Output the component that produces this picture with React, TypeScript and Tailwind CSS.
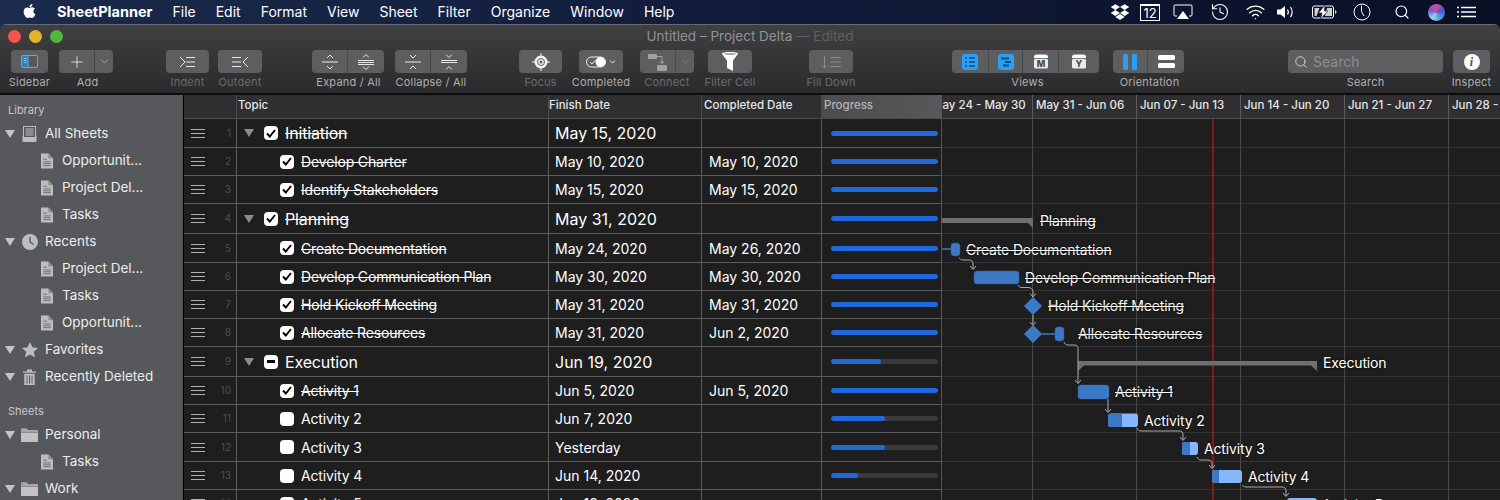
import { Plus, ChevronDown, Search, Wifi, History } from "lucide-react";
import { FaApple, FaDropbox } from "react-icons/fa";
import type { ReactNode } from "react";

type Row = {
  n: number;
  topic: string;
  finish: string;
  completed?: string;
  h: string;
  group?: boolean;
  state: "done" | "mixed" | "open";
  bar: string;
};

const rows: Row[] = [
  { n: 1, topic: "Initiation", finish: "May 15, 2020", h: "h-[29px]", group: true, state: "done", bar: "w-full" },
  { n: 2, topic: "Develop Charter", finish: "May 10, 2020", completed: "May 10, 2020", h: "h-[28px]", state: "done", bar: "w-full" },
  { n: 3, topic: "Identify Stakeholders", finish: "May 15, 2020", completed: "May 15, 2020", h: "h-[28px]", state: "done", bar: "w-full" },
  { n: 4, topic: "Planning", finish: "May 31, 2020", h: "h-[30px]", group: true, state: "done", bar: "w-full" },
  { n: 5, topic: "Create Documentation", finish: "May 24, 2020", completed: "May 26, 2020", h: "h-[29px]", state: "done", bar: "w-full" },
  { n: 6, topic: "Develop Communication Plan", finish: "May 30, 2020", completed: "May 30, 2020", h: "h-[28px]", state: "done", bar: "w-full" },
  { n: 7, topic: "Hold Kickoff Meeting", finish: "May 31, 2020", completed: "May 31, 2020", h: "h-[28px]", state: "done", bar: "w-full" },
  { n: 8, topic: "Allocate Resources", finish: "May 31, 2020", completed: "Jun 2, 2020", h: "h-[28px]", state: "done", bar: "w-full" },
  { n: 9, topic: "Execution", finish: "Jun 19, 2020", h: "h-[30px]", group: true, state: "mixed", bar: "w-[47%]" },
  { n: 10, topic: "Activity 1", finish: "Jun 5, 2020", completed: "Jun 5, 2020", h: "h-[28px]", state: "done", bar: "w-full" },
  { n: 11, topic: "Activity 2", finish: "Jun 7, 2020", h: "h-[28px]", state: "open", bar: "w-[50%]" },
  { n: 12, topic: "Activity 3", finish: "Yesterday", h: "h-[29px]", state: "open", bar: "w-[50%]" },
  { n: 13, topic: "Activity 4", finish: "Jun 14, 2020", h: "h-[28px]", state: "open", bar: "w-[25%]" },
  { n: 14, topic: "Activity 5", finish: "Jun 18, 2020", h: "h-[28px]", state: "open", bar: "w-[10%]" },
];

const weeks = [
  "May 24 - May 30",
  "May 31 - Jun 06",
  "Jun 07 - Jun 13",
  "Jun 14 - Jun 20",
  "Jun 21 - Jun 27",
  "Jun 28 - Jul 04",
];

const menus = ["File", "Edit", "Format", "View", "Sheet", "Filter", "Organize", "Window", "Help"];

const ganttLabels = [
  { text: "Planning", cls: "left-[98px] top-[92px]", done: true },
  { text: "Create Documentation", cls: "left-[24px] top-[121px]", done: true },
  { text: "Develop Communication Plan", cls: "left-[83px] top-[149px]", done: true },
  { text: "Hold Kickoff Meeting", cls: "left-[106px] top-[177px]", done: true },
  { text: "Allocate Resources", cls: "left-[136px] top-[205px]", done: true },
  { text: "Execution", cls: "left-[381px] top-[234px]", done: false },
  { text: "Activity 1", cls: "left-[173px] top-[263px]", done: true },
  { text: "Activity 2", cls: "left-[202px] top-[292px]", done: false },
  { text: "Activity 3", cls: "left-[262px] top-[320px]", done: false },
  { text: "Activity 4", cls: "left-[306px] top-[348px]", done: false },
  { text: "Activity 5", cls: "left-[380px] top-[376px]", done: false },
];

const Tri = ({ cls = "" }: { cls?: string }) => (
  <svg width="10" height="8" viewBox="0 0 10 8" className={cls}>
    <path d="M0 0h10L5 8z" fill="currentColor" />
  </svg>
);

const Check = ({ state }: { state: Row["state"] }) => (
  <div className="w-[14px] h-[14px] rounded-[4px] bg-white flex items-center justify-center shrink-0">
    {state === "done" && (
      <svg width="10" height="9" viewBox="0 0 10 9">
        <path d="M1 4.500l2.800 3L9 1" fill="none" stroke="#000" strokeWidth="1.900" />
      </svg>
    )}
    {state === "mixed" && <div className="w-[8px] h-[2.500px] bg-black" />}
  </div>
);

const Doc = () => (
  <svg width="12" height="16" viewBox="0 0 13 16" className="text-[#bdbdbf]">
    <path d="M0 0h8l5 5v11H0z" fill="currentColor" />
    <path d="M8 0v5h5" fill="#8d8e91" />
    <path d="M2.500 6h4M2.500 9h8M2.500 11h8M2.500 13h8" stroke="#6a6b6e" strokeWidth="1" />
  </svg>
);

const Tray = () => (
  <svg width="15" height="16" viewBox="0 0 15 16">
    <rect x="0.500" y="9" width="14" height="7" rx="1" fill="#bdbdbf" />
    <rect x="1.500" y="0.500" width="12" height="11" fill="#57585c" stroke="#bdbdbf" />
    <path d="M3.500 3h8M3.500 5h8M3.500 7h8M3.500 9h8" stroke="#bdbdbf" />
  </svg>
);

const ClockIcon = () => (
  <svg width="16" height="16" viewBox="0 0 16 16">
    <circle cx="8" cy="8" r="8" fill="#bdbdbf" />
    <path d="M8 3v5l3.500 2.500" fill="none" stroke="#57585c" strokeWidth="1.400" />
  </svg>
);

const Star = () => (
  <svg width="16" height="16" viewBox="0 0 16 16">
    <path d="M8 0l2.400 5.300 5.600.6-4.200 3.800 1.200 5.700L8 12.500l-5 2.900 1.200-5.700L0 5.900l5.600-.6z" fill="#bdbdbf" />
  </svg>
);

const Trash = () => (
  <svg width="13" height="16" viewBox="0 0 13 16">
    <path d="M0 2.500h13v1.300H0zM4 0.500h5v2H4z" fill="#bdbdbf" />
    <path d="M1.300 4.800h10.400V16H1.300z" fill="#bdbdbf" />
    <path d="M4 6.500v8M6.500 6.500v8M9 6.500v8" stroke="#57585c" />
  </svg>
);

const Folder = () => (
  <svg width="17" height="14" viewBox="0 0 17 14">
    <path d="M0 1.500C0 .8.500.3 1.200.3h4.300L7 2h8.800c.7 0 1.200.5 1.200 1.200V4H0z" fill="#a6a7a9" />
    <path d="M0 4.500h17V13c0 .6-.5 1-1 1H1c-.5 0-1-.4-1-1z" fill="#c2c2c4" />
  </svg>
);

const SideRow = ({ icon, label, child }: { icon: ReactNode; label: string; child?: boolean }) => (
  <div className="flex items-center h-[27px] text-[13.500px] text-[#ececec] whitespace-nowrap">
    {child ? (
      <>
        <div className="w-[13px] ml-[40px] flex justify-center">{icon}</div>
        <span className="ml-[9px]">{label}</span>
      </>
    ) : (
      <>
        <Tri cls="ml-[5px] text-[#c4c4c6] shrink-0" />
        <div className="w-[17px] ml-[6px] flex justify-center">{icon}</div>
        <span className="ml-[7px]">{label}</span>
      </>
    )}
  </div>
);

const Tool = ({ label, w, cls = "", labelCls = "", dim, children }: { label: string; w: string; cls?: string; labelCls?: string; dim?: boolean; children: ReactNode }) => (
  <div className={`${w} ${cls} flex flex-col items-center shrink-0`}>
    <div className="w-full h-[23px] rounded-[4px] bg-[#5e5e60] flex items-stretch overflow-hidden">{children}</div>
    <div className={`mt-[2px] text-[11px] leading-[14px] tracking-[0.2px] whitespace-nowrap ${labelCls} ${dim ? "text-[#6b6b6d]" : "text-[#adadaf]"}`}>{label}</div>
  </div>
);

const Seg = ({ w, line, children }: { w: string; line?: boolean; children: ReactNode }) => (
  <div className={`${w} flex items-center justify-center ${line ? "border-r border-[#49494b]" : ""}`}>{children}</div>
);

const Stroke = ({ d, w = 24, color = "#e8e8e8", h = 16 }: { d: string; w?: number; h?: number; color?: string }) => (
  <svg width={w} height={h} viewBox={`0 0 ${w} ${h}`}>
    <path d={d} fill="none" stroke={color} strokeWidth="1" />
  </svg>
);

const CalTile = ({ letter }: { letter: string }) => (
  <svg width="16" height="15" viewBox="0 0 16 15">
    <path d="M1 3c0-1.500 1-2.500 2.500-2.500h9C14 .5 15 1.500 15 3v1H1z" fill="#fff" />
    <rect x="1" y="4.800" width="14" height="9.700" rx="1.500" fill="#e9e9e9" />
    <text x="8" y="13" textAnchor="middle" fontSize="9" fontWeight="800" fill="#4a4a4a" fontFamily="Inter, sans-serif">{letter}</text>
  </svg>
);

export default function App() {
  return (
    <div className="w-[1500px] h-[500px] overflow-hidden bg-gradient-to-r from-[#1b2b4c] via-[#111b3a] to-[#090f25] [font-family:Inter,sans-serif] text-white">
      {/* menu bar */}
      <div className="h-[24px] flex items-center text-[14px] leading-none text-white">
        <FaApple className="ml-[22px] w-[15px] h-[16px] -mt-[2px]" />
        <span className="ml-[20px] text-[14.500px] font-bold">SheetPlanner</span>
        {menus.map((m) => (
          <span key={m} className="ml-[20px]">{m}</span>
        ))}
        <div className="ml-auto flex items-center">
          <FaDropbox className="w-[20px] h-[18px]" />
          <div className="ml-[10px] w-[20px] h-[17px] border border-white text-[13px] leading-[15px] text-center border-t-[2px]">12</div>
          <svg width="20" height="16" viewBox="0 0 20 16" className="ml-[13px]">
            <path d="M4 12H2a1 1 0 0 1-1-1V2a1 1 0 0 1 1-1h16a1 1 0 0 1 1 1v9a1 1 0 0 1-1 1h-2" fill="none" stroke="#fff" />
            <path d="M10 7l6 8H4z" fill="#fff" />
          </svg>
          <History className="ml-[17px] w-[20px] h-[20px]" strokeWidth={1.300} />
          <Wifi className="ml-[15px] w-[21px] h-[20px]" strokeWidth={1.600} />
          <svg width="18" height="14" viewBox="0 0 18 14" className="ml-[11px]">
            <path d="M0 4.500h3.500L8 1v12L3.500 9.500H0z" fill="#fff" />
            <path d="M10.500 4.500c1 1.500 1 3.500 0 5M13.500 2c2 3 2 7 0 10" fill="none" stroke="#fff" strokeWidth="1.200" />
          </svg>
          <svg width="25" height="14" viewBox="0 0 25 14" className="ml-[17px]">
            <rect x="0.500" y="1" width="21" height="12" rx="2" fill="none" stroke="#fff" />
            <path d="M2.500 3h5l-3 8h-2zM15 3h5v8h-7zM23 5c1 .3 1.500 1 1.500 2s-.5 1.700-1.500 2z" fill="#cfcfcf" />
            <path d="M13 0L6.500 8H10l-1.500 6L16 6h-3.700z" fill="#fff" stroke="#101730" strokeWidth="0.600" />
          </svg>
          <svg width="18" height="18" viewBox="0 0 18 18" className="ml-[16px]">
            <circle cx="9" cy="9" r="8" fill="none" stroke="#fff" />
            <path d="M8.500 2.500v6l2.500 4.500" fill="none" stroke="#fff" />
          </svg>
          <Search className="ml-[23px] w-[16px] h-[16px]" strokeWidth={1.800} />
          <div className="ml-[18px] w-[17px] h-[17px] rounded-full bg-[conic-gradient(#c64ba8,#5a4fd0,#3f9fe0,#8fd8e8,#8a55c8,#c64ba8)]" />
          <svg width="19" height="12" viewBox="0 0 19 12" className="ml-[12px] mr-[24px]">
            <path d="M4 1.500h15M4 6h15M4 10.500h15" stroke="#fff" strokeWidth="1.500" />
            <path d="M0 1.500h2M0 6h2M0 10.500h2" stroke="#fff" strokeWidth="1.500" />
          </svg>
        </div>
      </div>

      {/* window */}
      <div className="h-[476px] rounded-t-[6px] overflow-hidden bg-[#1e1e1e] flex flex-col">
        <div className="h-[71px] shrink-0 bg-gradient-to-b from-[#404042] to-[#2b2b2d] border-t border-[#6a6a6c] border-b-2 border-b-[#0c0c0c] flex flex-col">
          <div className="h-[22px] grid grid-cols-[1fr_auto_1fr] items-center">
            <div className="flex gap-[8px] pl-[8px]">
              <div className="w-[13px] h-[13px] rounded-full bg-[#f2544e]" />
              <div className="w-[13px] h-[13px] rounded-full bg-[#e2b328]" />
              <div className="w-[13px] h-[13px] rounded-full bg-[#50b93c]" />
            </div>
            <div className="text-[13.500px] text-[#929294] whitespace-nowrap">
              Untitled – Project Delta <span className="text-[#616163]">— Edited</span>
            </div>
            <div />
          </div>

          <div className="flex pl-[11px] mt-[3px]">
            <Tool label="Sidebar" w="w-[37px]">
              <Seg w="w-full">
                <svg width="17" height="13" viewBox="0 0 17 13">
                  <rect x="0.500" y="0.500" width="16" height="12" rx="1.500" fill="#56585c" stroke="#4fb0f0" />
                  <rect x="1" y="1" width="6" height="11" fill="#2f7fb8" />
                  <path d="M2.500 3.500h3M2.500 5.500h3M2.500 7.500h3" stroke="#7cc4ee" />
                  <path d="M7 1v11" stroke="#4fb0f0" />
                </svg>
              </Seg>
            </Tool>
            <Tool label="Add" w="w-[54px]" cls="ml-[11px]" labelCls="pl-[3px]">
              <Seg w="w-[36px]" line><Plus className="w-[18px] h-[18px] text-[#ededed]" strokeWidth={1.100} /></Seg>
              <Seg w="w-[18px]"><ChevronDown className="w-[13px] h-[13px] text-[#c4c4c4]" strokeWidth={1.300} /></Seg>
            </Tool>
            <Tool label="Indent" w="w-[43px]" cls="ml-[53px]" dim>
              <Seg w="w-full"><Stroke d="M4 3l5 5-5 5M10 3.500h9M10 8h9M10 12.500h9" /></Seg>
            </Tool>
            <Tool label="Outdent" w="w-[44px]" cls="ml-[9px]" dim>
              <Seg w="w-full"><Stroke d="M4 3.500h9M4 8h9M4 12.500h9M20 3l-5 5 5 5" /></Seg>
            </Tool>
            <Tool label="Expand / All" w="w-[72px]" cls="ml-[50px]" labelCls="pl-[1px]">
              <Seg w="w-[36px]" line><Stroke d="M9 4l3-3 3 3M4 8h16M9 12l3 3 3-3" /></Seg>
              <Seg w="w-[36px]"><Stroke d="M9 3.500l3-3 3 3M4 6.500h16M4 8.500h16M4 10.500h16M9 12.500l3 3 3-3" /></Seg>
            </Tool>
            <Tool label="Collapse / All" w="w-[72px]" cls="ml-[11px]">
              <Seg w="w-[36px]" line><Stroke d="M9 1l3 3 3-3M4 8h16M9 15l3-3 3 3" /></Seg>
              <Seg w="w-[36px]"><Stroke d="M9 .5l3 3 3-3M4 6.500h16M4 8.500h16M9 15.500l3-3 3 3" /></Seg>
            </Tool>
            <Tool label="Focus" w="w-[43px]" cls="ml-[52px]" dim>
              <Seg w="w-full">
                <svg width="18" height="18" viewBox="0 0 18 18">
                  <circle cx="9" cy="9" r="6.500" fill="#f2f2f2" />
                  <circle cx="9" cy="9" r="3.500" fill="none" stroke="#5e5e60" />
                  <circle cx="9" cy="9" r="1.500" fill="#5e5e60" />
                  <path d="M9 0v3M9 15v3M0 9h3M15 9h3" stroke="#f2f2f2" />
                </svg>
              </Seg>
            </Tool>
            <Tool label="Completed" w="w-[44px]" cls="ml-[17px]">
              <Seg w="w-full">
                <svg width="30" height="12" viewBox="0 0 30 12">
                  <rect x="0.500" y="1" width="19" height="10" rx="5" fill="none" stroke="#eee" />
                  <circle cx="14.500" cy="6" r="5" fill="#fff" />
                  <path d="M4 6l2 2 3.500-4" fill="none" stroke="#eee" />
                  <path d="M24 4.500l2.500 2.500 2.500-2.500" fill="none" stroke="#eee" />
                </svg>
              </Seg>
            </Tool>
            <Tool label="Connect" w="w-[54px]" cls="ml-[17px]" dim>
              <Seg w="w-[36px]" line>
                <svg width="20" height="18" viewBox="0 0 20 18">
                  <rect x="0" y="1" width="9" height="5" rx="1" fill="#a2a2a3" />
                  <rect x="9" y="12" width="10" height="6" rx="1" fill="#a2a2a3" />
                  <path d="M9 3.500h5v6" fill="none" stroke="#a2a2a3" />
                  <path d="M11.500 8.500l2.500 2.500 2.500-2.500z" fill="#a2a2a3" />
                </svg>
              </Seg>
              <Seg w="w-[18px]"><ChevronDown className="w-[13px] h-[13px] text-[#858586]" strokeWidth={1.300} /></Seg>
            </Tool>
            <Tool label="Filter Cell" w="w-[44px]" cls="ml-[14px]" dim>
              <Seg w="w-full">
                <svg width="16" height="19" viewBox="0 0 16 19">
                  <path d="M0 1.500C0 .7 3.500 0 8 0s8 .7 8 1.500c0 .5-1 1.500-5 7V19l-6-3V8.500C1 3 0 2 0 1.500z" fill="#fff" />
                  <ellipse cx="8" cy="2" rx="6" ry="1" fill="#a5a5a5" />
                </svg>
              </Seg>
            </Tool>
            <Tool label="Fill Down" w="w-[44px]" cls="ml-[57px]" dim>
              <Seg w="w-full"><Stroke color="#8c8c8d" d="M5.500 2v12M2.500 11l3 3 3-3M11 3.500h11M11 8h11M11 12.500h11" /></Seg>
            </Tool>
            <Tool label="Views" w="w-[147px]" cls="ml-[99px]" labelCls="pl-[4px]">
              <Seg w="w-[37px]" line>
                <svg width="16" height="16" viewBox="0 0 16 16">
                  <rect width="16" height="16" rx="3" fill="#29a0f5" />
                  <path d="M3 4h2M7 4h6M3 8h2M7 8h6M3 12h2M7 12h6" stroke="#0f4a78" strokeWidth="1.500" />
                </svg>
              </Seg>
              <Seg w="w-[34px]" line>
                <svg width="16" height="16" viewBox="0 0 16 16">
                  <rect width="16" height="16" rx="3" fill="#29a0f5" />
                  <path d="M3 4.500h8M7 8h6M5 11.500h6" stroke="#0f4a78" strokeWidth="2" />
                </svg>
              </Seg>
              <Seg w="w-[36px]" line><CalTile letter="M" /></Seg>
              <Seg w="w-[40px]"><CalTile letter="Y" /></Seg>
            </Tool>
            <Tool label="Orientation" w="w-[71px]" cls="ml-[14px]" labelCls="pl-[2px]">
              <Seg w="w-[35px]" line>
                <div className="flex gap-[4px]">
                  <div className="w-[5px] h-[16px] rounded-[1.500px] bg-[#29a0f5]" />
                  <div className="w-[5px] h-[16px] rounded-[1.500px] bg-[#29a0f5]" />
                </div>
              </Seg>
              <Seg w="w-[36px]">
                <div className="flex flex-col gap-[3px]">
                  <div className="w-[17px] h-[5px] rounded-[1.500px] bg-white" />
                  <div className="w-[17px] h-[5px] rounded-[1.500px] bg-white" />
                </div>
              </Seg>
            </Tool>
            <Tool label="Search" w="w-[155px]" cls="ml-[104px]">
              <div className="flex items-center w-full pl-[6px] text-[14px] text-[#8d8d8f]">
                <Search className="w-[14px] h-[14px] text-[#dcdcdc]" strokeWidth={1.500} />
                <span className="ml-[5px]">Search</span>
              </div>
            </Tool>
            <Tool label="Inspect" w="w-[37px]" cls="ml-[10px]">
              <Seg w="w-full">
                <div className="w-[16px] h-[16px] rounded-full bg-white text-[#4a4a4a] text-[12px] leading-[16px] font-bold italic text-center [font-family:'Liberation_Serif',serif]">i</div>
              </Seg>
            </Tool>
          </div>
        </div>

        <div className="flex flex-1 min-h-0">
          {/* sidebar */}
          <div className="w-[184px] shrink-0 bg-[#57585c] border-r border-black">
            <div className="h-[25px] pl-[8px] pt-[9px] text-[11px] leading-[13px] text-[#c6c6c8]">Library</div>
            <SideRow icon={<Tray />} label="All Sheets" />
            <SideRow child icon={<Doc />} label="Opportunit..." />
            <SideRow child icon={<Doc />} label="Project Del..." />
            <SideRow child icon={<Doc />} label="Tasks" />
            <SideRow icon={<ClockIcon />} label="Recents" />
            <SideRow child icon={<Doc />} label="Project Del..." />
            <SideRow child icon={<Doc />} label="Tasks" />
            <SideRow child icon={<Doc />} label="Opportunit..." />
            <SideRow icon={<Star />} label="Favorites" />
            <SideRow icon={<Trash />} label="Recently Deleted" />
            <div className="h-[31px] pl-[8px] pt-[15px] text-[11px] leading-[13px] text-[#c6c6c8]">Sheets</div>
            <SideRow icon={<Folder />} label="Personal" />
            <SideRow child icon={<Doc />} label="Tasks" />
            <SideRow icon={<Folder />} label="Work" />
          </div>

          {/* table */}
          <div className="w-[758px] shrink-0 flex flex-col border-r border-[#565656]">
            <div className="h-[24px] shrink-0 flex bg-[#2f2f31] border-b border-[#4c4c4c] text-[11.500px] font-medium text-[#e6e6e6] leading-[21px]">
              <div className="w-[53px] border-r border-[#4c4c4c]" />
              <div className="w-[312px] pl-[1px] border-r border-[#4c4c4c]">Topic</div>
              <div className="w-[153px] border-r border-[#4c4c4c]">Finish Date</div>
              <div className="w-[120px] pl-[2px] border-r border-[#4c4c4c]">Completed Date</div>
              <div className="flex-1 pl-[2px] bg-gradient-to-r from-[#4c4c4e] to-[#58585a] text-[#b4b4b6]">Progress</div>
            </div>
            {rows.map((r) => (
              <div key={r.n} className={`${r.h} shrink-0 flex border-b border-[#5c5c5c] box-border`}>
                <div className="w-[53px] flex items-center border-r border-[#5c5c5c]">
                  <div className="ml-[7px] w-[14px] flex flex-col gap-[3px]">
                    <div className="h-px bg-[#b0b0b0]" />
                    <div className="h-px bg-[#b0b0b0]" />
                    <div className="h-px bg-[#b0b0b0]" />
                  </div>
                  <div className="flex-1 pr-[5px] text-right text-[10px] text-[#4f4f4f]">{r.n}</div>
                </div>
                <div className={`w-[312px] flex items-center border-r border-[#5c5c5c] ${r.group ? "pl-[7px]" : "pl-[43px]"}`}>
                  {r.group && <Tri cls="mr-[10px] text-[#8c8c8c] shrink-0" />}
                  <Check state={r.state} />
                  <span className={`ml-[7px] whitespace-nowrap tracking-[-0.15px] ${r.group ? "text-[16px]" : "text-[14px]"} ${r.state === "done" ? "line-through" : ""}`}>{r.topic}</span>
                </div>
                <div className={`w-[153px] flex items-center pl-[6px] border-r border-[#5c5c5c] ${r.group ? "text-[16px]" : "text-[14px]"}`}>{r.finish}</div>
                <div className="w-[120px] flex items-center pl-[7px] border-r border-[#5c5c5c] text-[14px]">{r.completed}</div>
                <div className="flex-1 flex items-center pl-[9px] pr-[3px]">
                  <div className="w-full h-[5px] rounded-full bg-[#3a3a3c] overflow-hidden">
                    <div className={`${r.bar} h-full rounded-full bg-[#1f69dc]`} />
                  </div>
                </div>
              </div>
            ))}
          </div>

          {/* gantt */}
          <div className="flex-1 min-w-0 flex flex-col overflow-hidden">
            <div className="h-[24px] shrink-0 flex -ml-[13px] bg-[#2f2f31] border-b border-[#4c4c4c] text-[11.500px] font-medium text-[#e6e6e6] leading-[21px] whitespace-nowrap">
              {weeks.map((w) => (
                <div key={w} className="w-[104px] shrink-0 pl-[3px] border-r border-[#5c5c5c] overflow-hidden">{w}</div>
              ))}
            </div>
            <div className="relative flex-1">
              {rows.map((r) => (
                <div key={r.n} className={`${r.h} border-b border-[#343434] box-border`} />
              ))}
              <div className="absolute inset-0 -ml-[13px] flex">
                {weeks.map((w) => (
                  <div key={w} className="w-[104px] shrink-0 border-r border-[#484848]" />
                ))}
              </div>
              <svg width="558" height="381" viewBox="942 119 558 381" className="absolute inset-0">
                <path d="M1213 119V500" stroke="#a11d22" strokeWidth="1.500" />
                <g fill="#6f6f6f">
                  <path d="M941 218H1033V228L1028 223H941z" />
                  <path d="M1078 361H1317V371L1311 365.500H1084L1078 371z" />
                </g>
                <g fill="none" stroke="#a9a9a9" strokeWidth="1">
                  <path d="M959 257.500h0c1 2 2 2.500 4 2.500h6c3 0 4 1.500 4 4v5M970 266l3 3.500 3-3.500" />
                  <path d="M1018 285c1 2 2 2.500 4 2.500h6c3 0 5 1.500 5 4v5M1030 293.500l3 3.500 3-3.500" />
                  <path d="M1033 315v10M1030 322l3 3.500 3-3.500" />
                  <path d="M1064 342c1 2 2 3 4 3h6c3 0 4 1.500 4 4v34M1075 380l3 3.500 3-3.500" />
                  <path d="M1108 399v13M1105 409l3 3.500 3-3.500" />
                  <path d="M1137 428c1 2 2 3 4 3h38c3 0 4 1.500 4 4v5M1180 437l3 3.500 3-3.500" />
                  <path d="M1197 457c1 2 2 3 4 3h7c3 0 4 1.500 4 4v4M1209 465l3 3.500 3-3.500" />
                  <path d="M1242 485c1 1 2 2 4 2h36c3 0 4 1.500 4 4v5M1283 493l3 3.500 3-3.500" />
                </g>
                <path d="M941 249h10M1042 334h13" stroke="#3f7ac6" strokeWidth="1.500" />
                <g fill="#3d78c6" stroke="#2c5c9e" strokeWidth="0.500">
                  <rect x="951" y="243" width="9" height="13" rx="3" />
                  <rect x="974" y="271" width="45" height="13" rx="3" />
                  <path d="M1033 297l9 9-9 9-9-9z" />
                  <path d="M1033 325l9 9-9 9-9-9z" />
                  <rect x="1055" y="327" width="9" height="14" rx="3" />
                  <rect x="1078" y="385" width="31" height="14" rx="3" />
                </g>
                <g fill="#86b6fb">
                  <rect x="1108" y="413.500" width="30" height="13.500" rx="3" />
                  <rect x="1182" y="442" width="16" height="13" rx="3" />
                  <rect x="1212" y="470" width="30" height="13" rx="3" />
                  <rect x="1287" y="498" width="30" height="13" rx="3" />
                </g>
                <g fill="#3d78c6">
                  <path d="M1122 413.500h-11a3 3 0 0 0-3 3v7.500a3 3 0 0 0 3 3h11z" />
                  <path d="M1190 442h-5a3 3 0 0 0-3 3v7a3 3 0 0 0 3 3h5z" />
                  <path d="M1219 470h-4a3 3 0 0 0-3 3v7a3 3 0 0 0 3 3h4z" />
                </g>
              </svg>
              {ganttLabels.map((l) => (
                <span
                  key={l.text}
                  className={`absolute ${l.cls} h-[20px] leading-[20px] text-[14px] tracking-[-0.15px] whitespace-nowrap text-white [text-shadow:0_0_2px_#000] ${l.done ? "line-through" : ""}`}
                >
                  {l.text}
                </span>
              ))}
            </div>
          </div>
        </div>
      </div>
    </div>
  );
}
